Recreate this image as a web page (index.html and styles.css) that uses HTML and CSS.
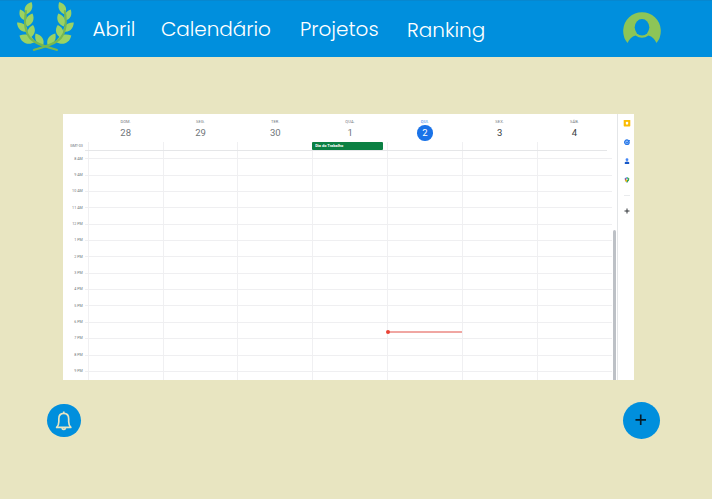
FILE: index.html
```html
<!DOCTYPE html>
<html lang="pt-BR">
<head>
<meta charset="utf-8">
<title>Calendário</title>
<link rel="stylesheet" href="styles.css">
</head>
<body>
<header class="topbar">
  <svg class="logo" viewBox="16 0 60 54">
    <defs>
      <g id="branch">
        <path class="leaf" d="M31.500 2C25 4 23 9 26 14.500C32 12 33.500 7 31.500 2Z"/>
        <path class="leaf" d="M20 9.500C18.500 15 20 19 25.500 20.500C28 16 25 11 20 9.500Z"/>
        <path class="leaf" d="M32.500 13.500C26 16 24 21 27 26.500C33 24 35 19 32.500 13.500Z"/>
        <path class="leaf" d="M17 22.500C17.500 29 21 32 27.500 32C28 26 23 22 17 22.500Z"/>
        <path class="leaf" d="M33 25C27 28 26 33 29.500 38.500C35 35 36.500 30 33 25Z"/>
        <path class="leaf" d="M19.500 35.500C21 43 28 46 35 42C32 35 26 33 19.500 35.500Z"/>
        <path class="leaf" d="M35.500 33.500C34 40 37 44 43 45.500C45 40 42 35 35.500 33.500Z"/>
        <path class="stem" d="M26 11C24 22 25 32 30 38C35 44 47 47 57 50"/>
      </g>
    </defs>
    <use href="#branch"/>
    <use href="#branch" transform="matrix(-1 0 0 1 90.800 0)"/>
  </svg>
  <nav class="menu">
    <a class="abril">Abril</a>
    <a class="calendario">Calendário</a>
    <a class="projetos">Projetos</a>
    <a class="ranking">Ranking</a>
  </nav>
  <svg class="avatar" viewBox="0 0 38 34">
    <path d="M4.500 31A18.800 18.800 0 1 1 33.500 31Q31 25 25.500 23.500Q19 28 12.500 23.500Q7 25 4.500 31Z"/>
    <ellipse cx="19" cy="15.300" rx="7.300" ry="8.300"/>
  </svg>
</header>
<main>
  <section class="calendar">
    <div class="schedule">
      <div class="days">
        <div></div>
        <div class="day"><small>DOM.</small><b>28</b></div>
        <div class="day"><small>SEG.</small><b>29</b></div>
        <div class="day"><small>TER.</small><b>30</b></div>
        <div class="day"><small>QUA.</small><b>1</b></div>
        <div class="day today"><small>QUI.</small><b>2</b></div>
        <div class="day future"><small>SEX.</small><b>3</b></div>
        <div class="day future"><small>SÁB.</small><b>4</b></div>
      </div>
      <div class="grid">
        <div class="hours">
          <span class="zone">GMT-03</span>
          <span>8 AM</span><span>9 AM</span><span>10 AM</span><span>11 AM</span><span>12 PM</span><span>1 PM</span><span>2 PM</span><span>3 PM</span><span>4 PM</span><span>5 PM</span><span>6 PM</span><span>7 PM</span><span>8 PM</span><span>9 PM</span>
        </div>
        <div class="col"></div>
        <div class="col"></div>
        <div class="col"></div>
        <div class="col"><div class="event">Dia do Trabalho</div></div>
        <div class="col"><i class="now"></i></div>
        <div class="col"></div>
        <div class="col"></div>
        <div class="rules"><i></i><i></i><i></i><i></i><i></i><i></i><i></i><i></i><i></i><i></i><i></i><i></i><i></i><i></i><i></i></div>
      </div>
    </div>
    <div class="scroll"><i></i></div>
    <aside class="apps">
      <svg viewBox="0 0 8 8"><rect x=".7" y=".9" width="6.600" height="6.600" rx=".7" fill="#fbbc04"/><circle cx="4" cy="4" r="1.300" fill="#fff"/><path d="M3.300 5.500h1.400" stroke="#fff" stroke-width=".6"/></svg>
      <svg viewBox="0 0 8 8"><circle cx="3.900" cy="4.200" r="2.300" fill="#8ab8f8" stroke="#2878e8" stroke-width="1.200"/><path d="M2.800 4l1.200 1.200L6.800 2" fill="none" stroke="#2878e8"/></svg>
      <svg viewBox="0 0 8 8"><circle cx="4" cy="2.700" r="1.400" fill="#4285f4"/><path d="M1.800 7V5.300Q4 3.600 6.200 5.300V7Z" fill="#1557c8"/></svg>
      <svg viewBox="0 0 8 8"><path d="M4 7L2 4.500A2.300 2.300 0 0 1 4 1.200Z" fill="#4285f4"/><path d="M4 1.200A2.200 2.200 0 0 1 6 4.300L4 7Z" fill="#34a853"/><path d="M2 4.500L4 3.200V5.500L3 6Z" fill="#fbbc04"/><path d="M2 2.300L4 3.300L2 4Z" fill="#ea4335"/><circle cx="4" cy="3.300" r=".75" fill="#fff"/></svg>
      <hr>
      <svg viewBox="0 0 8 8"><path d="M4 1.500v5M1.500 4h5" stroke="#303438" stroke-width="1"/></svg>
    </aside>
  </section>
  <div class="actions">
    <button class="bell"><svg viewBox="0 0 34 34"><path d="M9.800 23.800Q12 21.500 12 18V15Q12 9.500 17 9.500T22 15V18Q22 21.500 24.200 23.800Z"/><path d="M17 9.500V7.500M15 24.500Q17 27 19 24.500"/></svg></button>
    <button class="add"><svg viewBox="0 0 38 38"><path d="M18.200 12.900v10.800M12.800 18.300h10.800"/></svg></button>
  </div>
</main>
</body>
</html>
```
FILE: styles.css
```css
* { box-sizing: border-box; }
body { margin: 0; height: 499px; overflow: hidden; background: #e8e5c1; font-family: Roboto, "Liberation Sans", sans-serif; }
.topbar { height: 57px; background: #008fdd; border-top: 1px solid #0787cf; display: flex; align-items: flex-start; padding-left: 16px; }
.logo { width: 60px; height: 54px; margin-top: -1px; flex: none; }
.leaf { fill: #9bd363; }
.stem { fill: none; stroke: #78b850; stroke-width: 2; stroke-linecap: round; }
.menu { display: flex; width: 531px; padding: 13px 0 0 16.500px; color: #fff; font: 300 20px/30px Poppins, Inter, sans-serif; font-feature-settings: "cv11"; white-space: nowrap; }
.menu a { flex: none; }
.abril { width: 68.500px; }
.calendario { width: 139px; letter-spacing: -.05px; }
.projetos { width: 107px; }
.ranking { padding-top: 1px; }
.avatar { width: 38px; height: 34px; margin: 11px 0 0 16px; flex: none; }
.avatar path { fill: #8dc557; }
.avatar ellipse { fill: #008fdd; }
.calendar { margin: 57px 0 0 63.400px; width: 571px; height: 266px; background: #fff; display: flex; overflow: hidden; }
.schedule { width: 549px; flex: none; }
.days, .grid { display: grid; grid-template-columns: 24.400px repeat(7, 74.800px); }
.days { height: 28px; }
.day { display: flex; flex-direction: column; align-items: center; color: #70757a; padding: 5px 0 0 1px; }
.day small { font-size: 4px; line-height: 6px; letter-spacing: .15px; }
.day b { font-size: 9.500px; font-weight: 400; line-height: 15px; width: 15.500px; height: 15.500px; text-align: center; }
.future b { color: #3c4043; }
.today small { color: #1a73e8; }
.today b { color: #fff; background: #1a73e8; border-radius: 50%; }
.grid { height: 238px; position: relative; }
.hours { display: flex; flex-direction: column; text-align: right; padding-right: 5px; color: #70757a; font-size: 3.700px; white-space: nowrap; }
.hours span { height: 16.360px; line-height: 16.360px; flex: none; }
.hours .zone { height: 8.500px; line-height: 8px; }
.col { border-left: 1px solid #f0f0f2; }
.event { width: 71px; height: 7.500px; margin-left: -1px; background: #0b8043; color: #fff; border-radius: 1px; font-size: 4px; font-weight: 700; line-height: 7.500px; padding-left: 3px; }
.now { display: block; width: 75px; height: 1.500px; margin: 189.300px 0 0 -1px; background: #f0a6a2; position: relative; }
.now::before { content: ""; position: absolute; left: -1.200px; top: -1.500px; width: 4px; height: 4px; border-radius: 50%; background: #ea4335; }
.rules { position: absolute; inset: 8px 0 0 22px; display: flex; flex-direction: column; pointer-events: none; }
.rules i { flex: none; height: 16.360px; border-top: 1px solid #efeff1; }
.rules i:first-child { height: 8.200px; border-color: #e5e6e8; margin-right: 5px; }
.scroll { width: 5.500px; padding-top: 116px; border-right: 1px solid #e4e6e8; flex: none; }
.scroll i { display: block; width: 3px; height: 150px; margin-left: .3px; background: #bdc1c6; border-radius: 2px 2px 0 0; }
.apps { flex: 1; display: flex; flex-direction: column; align-items: center; padding: 5px 0 0 2px; }
.apps svg { width: 8px; height: 8px; margin-bottom: 11px; flex: none; }
.apps hr { width: 6px; height: 1px; border: 0; background: #e9ebed; margin: 0 0 11px; flex: none; }
.actions { display: flex; justify-content: space-between; align-items: center; margin-top: 21.800px; padding: 0 51.700px 0 47px; height: 37px; }
.actions button { border: 0; padding: 0; border-radius: 50%; background: #008fdd; display: block; }
.actions svg { display: block; width: 100%; height: 100%; fill: none; }
.bell { width: 33.500px; height: 33.500px; }
.bell path { stroke: #e8e5c1; stroke-width: 1.700; stroke-linejoin: round; }
.add { width: 37px; height: 37px; }
.add path { stroke: #061c29; stroke-width: 1.700; }
```
